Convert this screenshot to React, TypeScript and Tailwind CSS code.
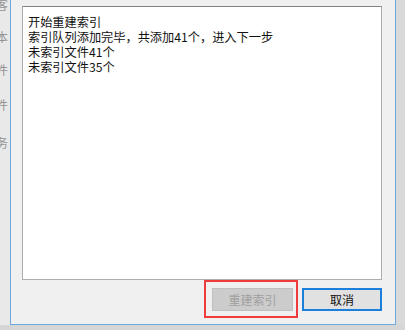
const lines = [
  '开始重建索引',
  '索引队列添加完毕，共添加41个，进入下一步',
  '未索引文件41个',
  '未索引文件35个',
];

// bits of the window underneath, cut off by the dialog edge
const behind = [
  { c: '客', cls: '-mt-[3px]' },
  { c: '本', cls: 'mt-[17px]' },
  { c: '件', cls: 'mt-[18px]' },
  { c: '件', cls: 'mt-[20px]' },
  { c: '务', cls: 'mt-[23px]' },
];

export default function App() {
  return (
    <div
      className="flex h-[330px] w-[405px] flex-col overflow-hidden bg-[#dcdcdc] text-[12px]"
      style={{ fontFamily: '"Noto Sans CJK SC", "Liberation Sans", sans-serif' }}
    >
      <div className="flex h-[325px]">
        <div className="flex w-[10px] flex-col overflow-hidden bg-[#e9e9e9] text-[#949494]">
          {behind.map((b, i) => (
            <span key={i} className={`-ml-[4px] block leading-[15px] ${b.cls}`}>
              {b.c}
            </span>
          ))}
        </div>

        {/* dialog */}
        <div className="flex w-[386px] flex-col border-x border-b border-[#6fa8dc] bg-[#f0f0f0] pl-[11px] pr-[13px] pt-[6px]">
          <div className="h-[274px] w-[360px] border border-[#adadad] border-t-[#828282] bg-white px-[5px] pt-[8px] text-[12.2px] leading-[15px] text-[#111]">
            {lines.map((l) => (
              <div key={l}>{l}</div>
            ))}
          </div>

          <div className="mt-[8px] flex justify-end gap-[9px]">
            <div className="relative">
              <button
                disabled
                className="h-[23px] w-[81px] border border-[#bfbfbf] bg-[#cccccc] text-[12px] leading-none text-[#a0a0a0]"
              >
                重建索引
              </button>
              <span className="pointer-events-none absolute -bottom-[7px] -left-[8px] -right-[5px] -top-[8px] border-2 border-[#ef3b3b]" />
            </div>
            <button className="h-[23px] w-[80px] border-2 border-[#1c7fdb] bg-[#e1e1e1] text-[12px] leading-none text-[#111]">
              取消
            </button>
          </div>
        </div>

        <div className="flex-1 bg-[#d9d9d9]" />
      </div>
      <div className="flex-1 bg-[#d6d6d6]" />
    </div>
  );
}
